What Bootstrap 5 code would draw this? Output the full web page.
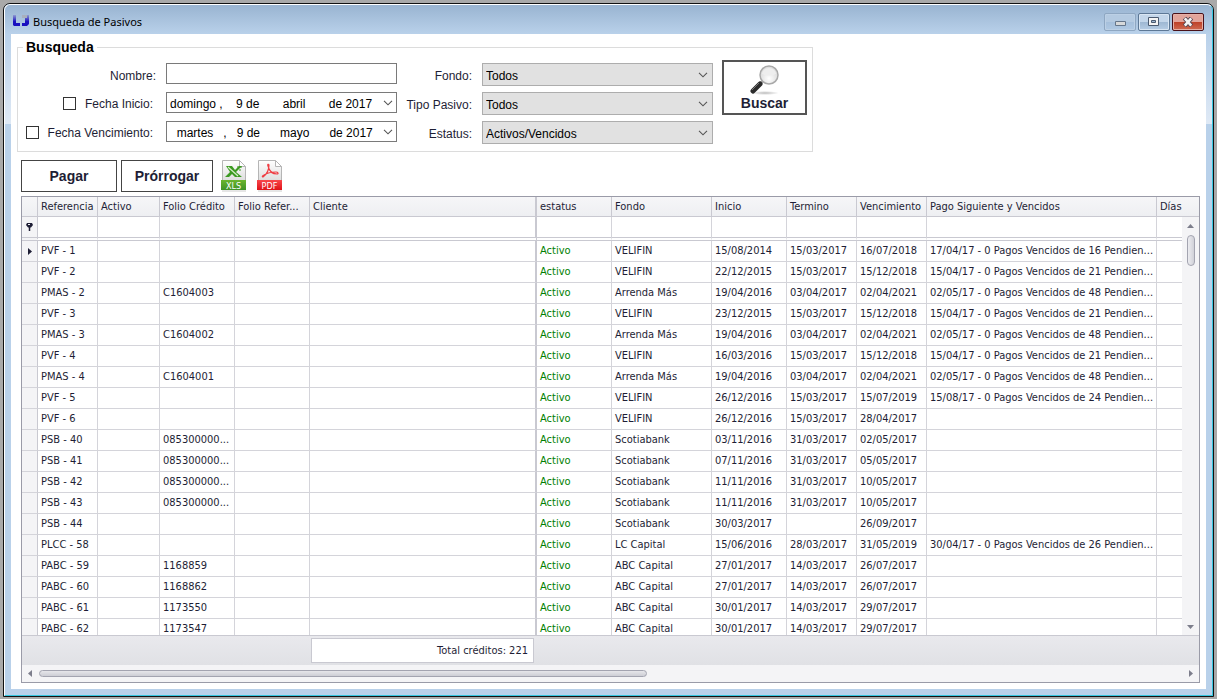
<!DOCTYPE html>
<html lang="es">
<head>
<meta charset="utf-8">
<meta name="viewport" content="width=device-width, initial-scale=1">
<title>Busqueda de Pasivos</title>
<link href="https://cdn.jsdelivr.net/npm/bootstrap@5.3.0/dist/css/bootstrap.min.css" rel="stylesheet">
<style>
  :root { --ink: #1e1e35; --frame: #b9d1ea; --line: #d4d4da; --grid-edge: #9a9ba8; }
  body { background: #a9a9a9; color: var(--ink); padding: 3px 3px 2px; font: 12px/16px "Liberation Sans", Arial, sans-serif; }
  .win { min-height: 0; border: 1px solid #111; border-radius: 7px 7px 0 0; overflow: hidden; background: var(--frame); }
  .win-inner { min-height: 0; border: 1px solid #fff; border-right-color: #35c6e0; border-bottom-color: #35c6e0; border-radius: 6px 6px 0 0; padding: 0 6px 6px;
    background: linear-gradient(#99b4d1, #b9d1ea 29px, #dfe9f5 119px, #b9d1ea 119px); }
  .titlebar { height: 29px; font: 11px/16px "Noto Sans", sans-serif; color: #000; }
  .titlebar h1 { font: inherit; }
  .titlebar .app-icon { margin: 2px 3px 0 2px; }
  .cap-group { gap: 2px; margin: 5px 2px 0 0; }
  .titlebar h1 { padding-top: 5px; }
  .cap-btn { width: 32px; height: 18px; border: 1px solid #5d7896; border-radius: 2px; padding: 0; display: flex; align-items: center; justify-content: center;
    background: linear-gradient(#c3d6ea 48%, #9db7d2 50%, #b6cde5); box-shadow: inset 0 0 0 1px #d9e6f3; }
  .cap-btn.dim { border-color: #8ea7c2; background: linear-gradient(#b4cae1 48%, #a5bfdb 50%, #b0c9e3); box-shadow: inset 0 0 0 1px #bcd0e5; }
  .cap-btn.shut { border-color: #4a1119; background: linear-gradient(#e2a49a 48%, #bd4027 50%, #cf6a51); box-shadow: inset 0 0 0 1px #e6b0a6; }
  .client { min-height: 0; background: #fff; padding: 4px 6px 6px; }
  .client .toolbar, .client .data-grid { margin-left: 4px; }
  .group-box { border: 1px solid #dcdcdc; width: fit-content; padding: 0 5px 7px 0; }
  .group-box legend { font: bold 14px/18px "Liberation Sans", sans-serif; color: #000; float: none; width: auto; margin: -10px 0 7px 5px; padding: 0 3px; background: #fff; }
  .fields { display: grid; grid-template-columns: 148px 231px 85px 231px 85px; grid-template-rows: repeat(3, 23px); row-gap: 6px; padding-right: 9px; }
  .fields .tag { display: flex; align-items: center; justify-content: flex-end; padding: 2px 10px 0 0; gap: 9px; white-space: nowrap; }
  .fields .tag.chk { grid-column: 1; padding: 0 13px 0 0; }
  .fields .form-check-input { width: 13px; height: 13px; margin: 0; border: 1px solid #333; border-radius: 0; }
  .field { height: 21px; border: 1px solid #7a7a7a; border-radius: 0; padding: 0 3px; font-size: 12px; line-height: 16px; color: #000; background: #fff; }
  .date-box { border: 1px solid #7a7a7a; height: 21px; flex-wrap: nowrap; }
  .date-box .field { border: 0; height: 19px; padding-top: 3px; white-space: pre; }
  .date-box button { border: 0; background: none; padding: 0 3px; line-height: 0; }
  .combo { height: 23px; border: 1px solid #adadad; border-radius: 0; padding: 2px 20px 0 3px; font-size: 12px; line-height: 16px; color: #000;
    background: #e1e1e1 url("data:image/svg+xml,%3Csvg xmlns='http://www.w3.org/2000/svg' viewBox='0 0 10 6'%3E%3Cpath d='M1 .8l4 4 4-4' fill='none' stroke='%23555' stroke-width='1.1'/%3E%3C/svg%3E") no-repeat right 4px center / 10px 6px; }
  .flat { border-radius: 0; background: #fff; color: var(--ink); font: bold 14px/16px "Liberation Sans", sans-serif; padding: 0; }
  .btn-find { grid-column: 5; grid-row: 1 / 3; align-self: end; height: 55px; margin-left: 9px; width: 85px; border: 2px solid #555; padding-top: 1px; }
  .toolbar { gap: 4px; margin-top: 8px; margin-bottom: 4px; }
  .toolbar .flat { height: 32px; border: 1px solid #444; }
  .toolbar .pay { width: 96px; } .toolbar .extend { width: 92px; }
  .icon-btn { border: 0; background: none; padding: 0; line-height: 0; margin-left: 4px; margin-right: 2px; }
  .data-grid { border: 1px solid var(--grid-edge); min-height: 0; font: 11px/16px "DejaVu Sans Condensed", "DejaVu Sans", sans-serif; }
  .rows-area { min-height: 0; flex: 1 1 0; overflow: hidden; position: relative; }
  .pasivos { table-layout: fixed; width: 100%; border-collapse: separate; border-spacing: 0; }
  .pasivos th, .pasivos td { border: 0 solid var(--line); border-width: 0 1px 1px 0; padding: 0 0 0 3px; height: 21px; font-weight: normal; white-space: nowrap; overflow: hidden; line-height: 16px; }
  .pasivos thead th { height: 20px; background: linear-gradient(#f6f6f8, #eeeff2); border-color: #c9c9d1; }
  .pasivos tr.filter td { height: 24px; border-bottom: 4px double #c9c9d1; }
  .pasivos td:first-child { background: #f4f4f6; padding: 0; text-align: center; line-height: 0; border-right-color: #c9c9d1; }
  .pasivos tr > :nth-child(6) { border-right: 2px solid #c9c9d1; }
  .pasivos tr > :last-child { border-right: 0; }
  .pasivos .st { color: #008000; }
  .vbar { position: absolute; top: 20px; right: 0; bottom: 0; width: 17px; background: #f4f4f6; padding: 7px 0 6px; }
  .vbar .thumb { width: 8px; height: 31px; margin-top: 7px; background: linear-gradient(90deg, #ececf0, #d0d1d8); }
  .thumb { border: 1px solid #a3a4b0; border-radius: 4px; }
  .summary { height: 30px; border-top: 1px solid #c9c9d1; background: linear-gradient(#e9e9ed, #e0e1e5); padding: 2px 0 2px 289px; }
  .summary output { width: 223px; height: 25px; border: 1px solid #c9c9d1; background: #fff; padding: 4px 5px 0; text-align: right; display: block; }
  .hbar { height: 17px; background: #f4f4f6; padding: 0 6px; }
  .hbar .track { margin: 0 34px 0 7px; }
  .hbar .thumb { height: 7px; background: linear-gradient(#e6e6ea, #cdced5); }
  svg { display: block; flex: none; }
  .pasivos svg { margin: 0 auto; }
</style>
</head>
<body class="vh-100 d-flex flex-column">
<div class="win flex-fill d-flex flex-column">
<div class="win-inner flex-fill d-flex flex-column">
  <header class="titlebar d-flex align-items-center">
    <svg class="app-icon" width="17" height="12" viewBox="0 0 17 12"><defs><linearGradient id="lg" x2="0" y2="1"><stop offset="0" stop-color="#8f9bd0"/><stop offset=".6" stop-color="#1a10c0"/></linearGradient></defs><path d="M0 0h3v8h4v3H1L0 10z" fill="url(#lg)"/><path d="M9 0h7v9l-2 2H9V8h3V3H9z" fill="url(#lg)"/><path d="M9 0h5v3H9z" fill="#a8b0bd"/></svg>
    <h1 class="m-0 me-auto">Busqueda de Pasivos</h1>
    <div class="cap-group d-flex">
      <button class="cap-btn dim" aria-label="Minimizar"><svg width="12" height="12" viewBox="0 0 12 12"><path d="M1.500 5.500h10v4h-10z" fill="#d7d9da" stroke="#65768a"/></svg></button>
      <button class="cap-btn" aria-label="Maximizar"><svg width="12" height="10" viewBox="0 0 12 10"><path d="M.5.5h10v8H.5z" fill="#f4f4f4" stroke="#4a5a70"/><path d="M3.500 3.500h4v2h-4z" fill="#9db7d2" stroke="#4a5a70"/></svg></button>
      <button class="cap-btn shut" aria-label="Cerrar"><svg width="12" height="10" viewBox="0 0 12 10"><path d="M2.500 1l7 8M9.500 1l-7 8" stroke="#5a4a55" stroke-width="4.500"/><path d="M2.800 1.300l6.400 7.400M9.200 1.300l-6.400 7.400" stroke="#f4f4f4" stroke-width="2.600"/></svg></button>
    </div>
  </header>
  <main class="client flex-fill d-flex flex-column">
    <fieldset class="group-box">
      <legend>Busqueda</legend>
      <div class="fields">
        <label class="tag" for="nombre">Nombre:</label>
        <input class="form-control field" id="nombre" type="text">
        <label class="tag" for="fondo">Fondo:</label>
        <select class="form-select combo" id="fondo"><option>Todos</option></select>
        <button class="flat btn-find d-flex flex-column align-items-center" type="button">
          <svg width="30" height="32" viewBox="2 0 30 32"><defs><radialGradient id="lens" cx=".5" cy=".7"><stop offset="0" stop-color="#fff"/><stop offset="1" stop-color="#dedede"/></radialGradient><radialGradient id="sh"><stop offset="0" stop-color="#bbb"/><stop offset="1" stop-color="#fff"/></radialGradient></defs><ellipse cx="17" cy="30" rx="14" ry="2" fill="url(#sh)"/><path d="M15 18l-3 3" stroke="#999" stroke-width="3"/><path d="M12 21l-7 7" stroke="#2b2b2b" stroke-width="5" stroke-linecap="round"/><path d="M11 20l-7 7" stroke="#777"/><circle cx="21" cy="12" r="9" fill="url(#lens)" stroke="#a9a9a9" stroke-width="1.500"/><path d="M14 11a7 6 0 0 1 14 0q-7 3-14 0" fill="#eee"/></svg>
          <span>Buscar</span>
        </button>
        <div class="tag chk"><input class="form-check-input" type="checkbox" id="ini"><label for="ini">Fecha Inicio:</label></div>
        <div class="input-group date-box"><input class="form-control field" type="text" aria-label="Fecha Inicio" value="domingo ,    9 de       abril       de 2017"><button type="button" aria-label="Abrir calendario"><svg width="10" height="6" viewBox="0 0 10 6"><path d="M1 .8l4 4 4-4" fill="none" stroke="#555" stroke-width="1.100"/></svg></button></div>
        <label class="tag" for="tipo">Tipo Pasivo:</label>
        <select class="form-select combo" id="tipo"><option>Todos</option></select>
        <div class="tag chk"><input class="form-check-input" type="checkbox" id="ven"><label for="ven">Fecha Vencimiento:</label></div>
        <div class="input-group date-box"><input class="form-control field" type="text" aria-label="Fecha Vencimiento" value="  martes   ,   9 de      mayo      de 2017"><button type="button" aria-label="Abrir calendario"><svg width="10" height="6" viewBox="0 0 10 6"><path d="M1 .8l4 4 4-4" fill="none" stroke="#555" stroke-width="1.100"/></svg></button></div>
        <label class="tag" for="estatus">Estatus:</label>
        <select class="form-select combo" id="estatus"><option>Activos/Vencidos</option></select>
      </div>
    </fieldset>
    <div class="toolbar d-flex">
      <button class="flat pay" type="button">Pagar</button>
      <button class="flat extend" type="button">Prórrogar</button>
      <button class="icon-btn" type="button" aria-label="Exportar a XLS"><svg width="26" height="32" viewBox="0 0 26 32"><defs><linearGradient id="pg" x2="0" y2="1"><stop offset="0" stop-color="#fff"/><stop offset="1" stop-color="#cfcfcf"/></linearGradient><linearGradient id="gr" x2="0" y2="1"><stop offset="0" stop-color="#6cb52d"/><stop offset="1" stop-color="#3f9226"/></linearGradient></defs><path d="M1.500.5h17l6 6v23h-23z" fill="url(#pg)" stroke="#b5b5b5"/><path d="M18.500.5v6h6z" fill="#fff" stroke="#b5b5b5"/><path d="M1 31h24" stroke="#ccc"/><path d="M0 20h25v10H0z" fill="url(#gr)"/><path d="M5 6h6l3 4 4-4h3l-6 6 6 5h-7l-3-3-3 3H4l5-5z" fill="#3c9a22"/><path d="M7 7l10 9" stroke="#d6efc9" stroke-width="1.200"/><path d="M16 7h5M18 10h3" stroke="#3c9a22" stroke-dasharray="2 1"/><text x="12.500" y="28.500" text-anchor="middle" fill="#fff" font-family="DejaVu Sans Condensed" font-size="9">XLS</text></svg></button>
      <button class="icon-btn" type="button" aria-label="Exportar a PDF"><svg width="26" height="32" viewBox="0 0 26 32"><defs><linearGradient id="rd" x2="0" y2="1"><stop offset="0" stop-color="#f8474b"/><stop offset="1" stop-color="#e01218"/></linearGradient></defs><path d="M1.500.5h17l6 6v23h-23z" fill="url(#pg)" stroke="#b5b5b5"/><path d="M18.500.5v6h6z" fill="#fff" stroke="#b5b5b5"/><path d="M1 31h24" stroke="#ccc"/><path d="M0 20h25v10H0z" fill="url(#rd)"/><path d="M6 17c4-3 6-8 6-12 0-1-2-1-1 1 1 4 4 8 9 8 2 0 1-2-1-2-5 0-9 1-12 3-2 1-2 2-1 2z" fill="none" stroke="#ef3e44" stroke-width="1.200"/><text x="12.500" y="28.500" text-anchor="middle" fill="#fff" font-family="DejaVu Sans Condensed" font-size="9">PDF</text></svg></button>
    </div>
    <section class="data-grid flex-fill d-flex flex-column">
      <div class="rows-area">
        <table class="pasivos">
          <colgroup><col style="width:16px"><col style="width:60px"><col style="width:62px"><col style="width:75px"><col style="width:75px"><col style="width:227px"><col style="width:75px"><col style="width:100px"><col style="width:75px"><col style="width:70px"><col style="width:70px"><col style="width:230px"><col></colgroup>
          <thead><tr><th></th><th>Referencia</th><th>Activo</th><th>Folio Crédito</th><th>Folio Refer...</th><th>Cliente</th><th>estatus</th><th>Fondo</th><th>Inicio</th><th>Termino</th><th>Vencimiento</th><th>Pago Siguiente y Vencidos</th><th>Días</th></tr></thead>
          <tbody id="filas">
            <tr class="filter"><td><svg width="7" height="8" viewBox="0 0 7 8"><path d="M1 0h5l1 2-2 2.500H2L0 2z" fill="#1e1e35"/><path d="M2 1.500h2" stroke="#f4f4f6"/><path d="M3.500 4v4" stroke="#1e1e35" stroke-width="1.500"/></svg></td><td></td><td></td><td></td><td></td><td></td><td></td><td></td><td></td><td></td><td></td><td></td><td></td></tr>
          </tbody>
        </table>
        <div class="vbar d-flex flex-column align-items-center">
          <svg width="7" height="4" viewBox="0 0 7 4"><path d="M0 4l3.500-4L7 4z" fill="#7d7e8c"/></svg>
          <div class="thumb"></div>
          <svg class="mt-auto" width="7" height="4" viewBox="0 0 7 4"><path d="M0 0l3.500 4L7 0z" fill="#7d7e8c"/></svg>
        </div>
      </div>
      <div class="summary"><output>Total créditos: 221</output></div>
      <div class="hbar d-flex align-items-center">
        <svg width="4" height="7" viewBox="0 0 4 7"><path d="M4 0L0 3.500 4 7z" fill="#7d7e8c"/></svg>
        <div class="track flex-fill"><div class="thumb" style="width:54.5%"></div></div>
        <svg width="4" height="7" viewBox="0 0 4 7"><path d="M0 0l4 3.500L0 7z" fill="#7d7e8c"/></svg>
      </div>
    </section>
  </main>
</div>
</div>
<script src="https://cdn.jsdelivr.net/npm/bootstrap@5.3.0/dist/js/bootstrap.bundle.min.js"></script>
<script>
  // referencia | folio | fondo | inicio | termino | vencimiento | pago siguiente
  const datos = `PVF - 1||VELIFIN|15/08/2014|15/03/2017|16/07/2018|17/04/17 - 0 Pagos Vencidos de 16 Pendien...
PVF - 2||VELIFIN|22/12/2015|15/03/2017|15/12/2018|15/04/17 - 0 Pagos Vencidos de 21 Pendien...
PMAS - 2|C1604003|Arrenda Más|19/04/2016|03/04/2017|02/04/2021|02/05/17 - 0 Pagos Vencidos de 48 Pendien...
PVF - 3||VELIFIN|23/12/2015|15/03/2017|15/12/2018|15/04/17 - 0 Pagos Vencidos de 21 Pendien...
PMAS - 3|C1604002|Arrenda Más|19/04/2016|03/04/2017|02/04/2021|02/05/17 - 0 Pagos Vencidos de 48 Pendien...
PVF - 4||VELIFIN|16/03/2016|15/03/2017|15/12/2018|15/04/17 - 0 Pagos Vencidos de 21 Pendien...
PMAS - 4|C1604001|Arrenda Más|19/04/2016|03/04/2017|02/04/2021|02/05/17 - 0 Pagos Vencidos de 48 Pendien...
PVF - 5||VELIFIN|26/12/2016|15/03/2017|15/07/2019|15/08/17 - 0 Pagos Vencidos de 24 Pendien...
PVF - 6||VELIFIN|26/12/2016|15/03/2017|28/04/2017|
PSB - 40|085300000...|Scotiabank|03/11/2016|31/03/2017|02/05/2017|
PSB - 41|085300000...|Scotiabank|07/11/2016|31/03/2017|05/05/2017|
PSB - 42|085300000...|Scotiabank|11/11/2016|31/03/2017|10/05/2017|
PSB - 43|085300000...|Scotiabank|11/11/2016|31/03/2017|10/05/2017|
PSB - 44||Scotiabank|30/03/2017||26/09/2017|
PLCC - 58||LC Capital|15/06/2016|28/03/2017|31/05/2019|30/04/17 - 0 Pagos Vencidos de 26 Pendien...
PABC - 59|1168859|ABC Capital|27/01/2017|14/03/2017|26/07/2017|
PABC - 60|1168862|ABC Capital|27/01/2017|14/03/2017|26/07/2017|
PABC - 61|1173550|ABC Capital|30/01/2017|14/03/2017|29/07/2017|
PABC - 62|1173547|ABC Capital|30/01/2017|14/03/2017|29/07/2017|`;
  const marca = '<svg width="4" height="7" viewBox="0 0 4 7"><path d="M0 0l4 3.500L0 7z" fill="#1e1e35"/></svg>';
  document.getElementById('filas').insertAdjacentHTML('beforeend', datos.split('\n').map((l, i) => {
    const [ref, folio, fondo, ini, ter, ven, pago] = l.split('|');
    return `<tr><td>${i ? '' : marca}</td><td>${ref}</td><td></td><td>${folio}</td><td></td><td></td><td class="st">Activo</td><td>${fondo}</td><td>${ini}</td><td>${ter}</td><td>${ven}</td><td>${pago}</td><td></td></tr>`;
  }).join(''));
</script>
</body>
</html>
